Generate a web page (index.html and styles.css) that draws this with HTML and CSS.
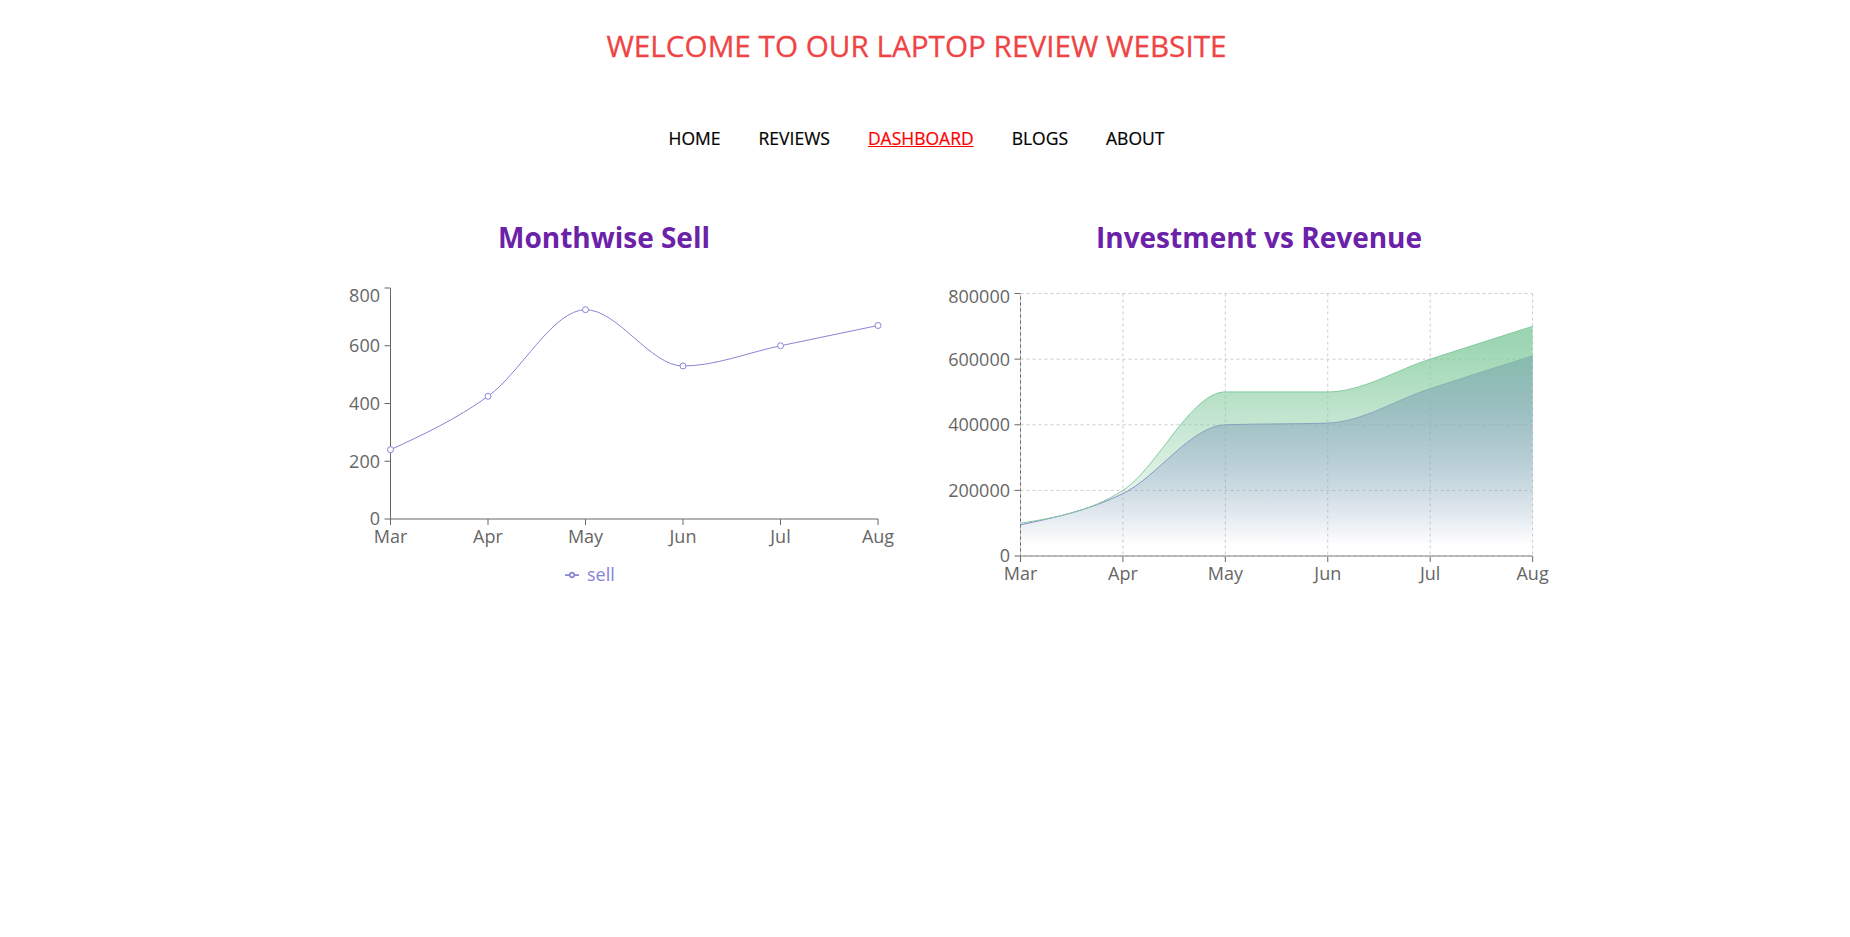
FILE: index.html
```html
<!DOCTYPE html>
<html lang="en">
<head>
<meta charset="utf-8">
<title>Laptop Review - Dashboard</title>
<link rel="stylesheet" href="styles.css">
</head>
<body>
<header class="top">
  <h1 class="site-title">WELCOME TO OUR LAPTOP REVIEW WEBSITE</h1>
  <nav>
    <ul class="nav">
      <li><a href="#">HOME</a></li>
      <li><a href="#">REVIEWS</a></li>
      <li><a href="#" class="active">DASHBOARD</a></li>
      <li><a href="#">BLOGS</a></li>
      <li><a href="#">ABOUT</a></li>
    </ul>
  </nav>
</header>

<main class="charts">
  <section class="chart chart-left">
    <h2 class="chart-title">Monthwise Sell</h2>
    <svg class="chart-svg" width="648" height="330" viewBox="0 0 648 330">
      <g class="axis">
        <line x1="110.5" y1="28" x2="110.5" y2="259"/>
        <line x1="110.5" y1="259" x2="598" y2="259"/>
        <line x1="104.5" y1="259" x2="110.5" y2="259"/>
        <line x1="104.5" y1="201.25" x2="110.5" y2="201.25"/>
        <line x1="104.5" y1="143.5" x2="110.5" y2="143.5"/>
        <line x1="104.5" y1="85.75" x2="110.5" y2="85.75"/>
        <line x1="104.5" y1="28" x2="110.5" y2="28"/>
        <line x1="110.5" y1="259" x2="110.5" y2="265"/>
        <line x1="208" y1="259" x2="208" y2="265"/>
        <line x1="305.5" y1="259" x2="305.5" y2="265"/>
        <line x1="403" y1="259" x2="403" y2="265"/>
        <line x1="500.5" y1="259" x2="500.5" y2="265"/>
        <line x1="598" y1="259" x2="598" y2="265"/>
      </g>
      <g class="tick-y">
        <text x="100" y="259" dy="0.355em">0</text>
        <text x="100" y="201.25" dy="0.355em">200</text>
        <text x="100" y="143.5" dy="0.355em">400</text>
        <text x="100" y="85.75" dy="0.355em">600</text>
        <text x="100" y="36" dy="0.355em">800</text>
      </g>
      <g class="tick-x">
        <text x="110.5" y="283">Mar</text>
        <text x="208" y="283">Apr</text>
        <text x="305.5" y="283">May</text>
        <text x="403" y="283">Jun</text>
        <text x="500.5" y="283">Jul</text>
        <text x="598" y="283">Aug</text>
      </g>
      <path class="sell-line" d="M110.5,189.7C143,174.67,175.5,159.63,208,136.3C240.5,112.97,273,49.7,305.5,49.7C338,49.7,370.5,106,403,106C435.5,106,468,92.5,500.5,85.75C533,79,565.5,72.25,598,65.5"/>
      <g class="dots">
        <circle cx="110.5" cy="189.7" r="3"/>
        <circle cx="208" cy="136.3" r="3"/>
        <circle cx="305.5" cy="49.7" r="3"/>
        <circle cx="403" cy="106" r="3"/>
        <circle cx="500.5" cy="85.75" r="3"/>
        <circle cx="598" cy="65.5" r="3"/>
      </g>
      <g class="legend">
        <path transform="translate(285,308) scale(0.4375)" d="M0,16h10.67A5.33,5.33,0,1,1,21.33,16H32M21.33,16A5.33,5.33,0,1,1,10.67,16"/>
        <text x="307" y="315" dy="0.355em">sell</text>
      </g>
    </svg>
  </section>

  <section class="chart chart-right">
    <h2 class="chart-title">Investment vs Revenue</h2>
    <svg class="chart-svg" width="622" height="330" viewBox="0 0 622 330">
      <defs>
        <linearGradient id="gradInvest" x1="0" y1="0" x2="0" y2="1">
          <stop offset="5%" stop-color="#8884d8" stop-opacity="0.8"/>
          <stop offset="95%" stop-color="#8884d8" stop-opacity="0"/>
        </linearGradient>
        <linearGradient id="gradRevenue" x1="0" y1="0" x2="0" y2="1">
          <stop offset="5%" stop-color="#82ca9d" stop-opacity="0.8"/>
          <stop offset="95%" stop-color="#82ca9d" stop-opacity="0"/>
        </linearGradient>
      </defs>
      <g class="axis">
        <line x1="72.5" y1="33.5" x2="72.5" y2="296"/>
        <line x1="72.5" y1="296" x2="584.6" y2="296"/>
        <line x1="66.5" y1="296" x2="72.5" y2="296"/>
        <line x1="66.5" y1="230.375" x2="72.5" y2="230.375"/>
        <line x1="66.5" y1="164.75" x2="72.5" y2="164.75"/>
        <line x1="66.5" y1="99.125" x2="72.5" y2="99.125"/>
        <line x1="66.5" y1="33.5" x2="72.5" y2="33.5"/>
        <line x1="72.5" y1="296" x2="72.5" y2="302"/>
        <line x1="174.92" y1="296" x2="174.92" y2="302"/>
        <line x1="277.34" y1="296" x2="277.34" y2="302"/>
        <line x1="379.76" y1="296" x2="379.76" y2="302"/>
        <line x1="482.18" y1="296" x2="482.18" y2="302"/>
        <line x1="584.6" y1="296" x2="584.6" y2="302"/>
      </g>
      <g class="grid">
        <line x1="72.5" y1="296" x2="584.6" y2="296"/>
        <line x1="72.5" y1="230.375" x2="584.6" y2="230.375"/>
        <line x1="72.5" y1="164.75" x2="584.6" y2="164.75"/>
        <line x1="72.5" y1="99.125" x2="584.6" y2="99.125"/>
        <line x1="72.5" y1="33.5" x2="584.6" y2="33.5"/>
        <line x1="72.5" y1="33.5" x2="72.5" y2="296"/>
        <line x1="174.92" y1="33.5" x2="174.92" y2="296"/>
        <line x1="277.34" y1="33.5" x2="277.34" y2="296"/>
        <line x1="379.76" y1="33.5" x2="379.76" y2="296"/>
        <line x1="482.18" y1="33.5" x2="482.18" y2="296"/>
        <line x1="584.6" y1="33.5" x2="584.6" y2="296"/>
      </g>
      <path class="area-invest" d="M72.5,264.83C106.64,257.59,140.78,250.34,174.92,233.66C209.06,216.98,243.2,165.84,277.34,164.75C311.48,163.66,345.62,164.2,379.76,163.11C413.9,162.02,448.04,139.87,482.18,128.66C516.32,117.45,550.46,106.64,584.6,95.84L584.6,296L72.5,296Z"/>
      <path class="line-invest" d="M72.5,264.83C106.64,257.59,140.78,250.34,174.92,233.66C209.06,216.98,243.2,165.84,277.34,164.75C311.48,163.66,345.62,164.2,379.76,163.11C413.9,162.02,448.04,139.87,482.18,128.66C516.32,117.45,550.46,106.64,584.6,95.84"/>
      <path class="area-revenue" d="M72.5,263.19C106.64,257.72,140.78,252.25,174.92,230.38C209.06,208.5,243.2,131.94,277.34,131.94C311.48,131.94,345.62,131.94,379.76,131.94C413.9,131.94,448.04,110.06,482.18,99.13C516.32,88.19,550.46,77.25,584.6,66.31L584.6,296L72.5,296Z"/>
      <path class="line-revenue" d="M72.5,263.19C106.64,257.72,140.78,252.25,174.92,230.38C209.06,208.5,243.2,131.94,277.34,131.94C311.48,131.94,345.62,131.94,379.76,131.94C413.9,131.94,448.04,110.06,482.18,99.13C516.32,88.19,550.46,77.25,584.6,66.31"/>
      <g class="tick-y">
        <text x="62" y="296" dy="0.355em">0</text>
        <text x="62" y="230.375" dy="0.355em">200000</text>
        <text x="62" y="164.75" dy="0.355em">400000</text>
        <text x="62" y="99.125" dy="0.355em">600000</text>
        <text x="62" y="37" dy="0.355em">800000</text>
      </g>
      <g class="tick-x">
        <text x="72.5" y="320">Mar</text>
        <text x="174.92" y="320">Apr</text>
        <text x="277.34" y="320">May</text>
        <text x="379.76" y="320">Jun</text>
        <text x="482.18" y="320">Jul</text>
        <text x="584.6" y="320">Aug</text>
      </g>
    </svg>
  </section>
</main>
</body>
</html>
```
FILE: styles.css
```css
html, body {
  margin: 0;
  padding: 0;
  background: #ffffff;
}

body {
  font-family: "Open Sans", "Noto Sans", "Liberation Sans", sans-serif;
  color: #000;
}

.top {
  padding-right: 17px;
  text-align: center;
}

.site-title {
  margin: 26px 0 0;
  font-size: 29.7px;
  line-height: 40px;
  font-weight: 400;
  color: #ef4444;
  -webkit-text-stroke: 0.3px #ef4444;
}

.nav {
  list-style: none;
  margin: 60px 0 0;
  padding: 0;
  display: flex;
  justify-content: center;
  gap: 38px;
}

.nav li {
  font-size: 17.5px;
  line-height: 24px;
}

.nav a {
  color: #000;
  text-decoration: none;
  -webkit-text-stroke: 0.2px #000;
}

.nav a.active {
  color: #ff0000;
  text-decoration: underline;
  -webkit-text-stroke: 0.2px #ff0000;
}

.charts {
  display: flex;
  justify-content: center;
  gap: 20px;
  margin-top: 68px;
}

.chart {
  display: flex;
  flex-direction: column;
  align-items: stretch;
}

.chart-left { width: 648px; }
.chart-right { width: 622px; }

.chart-title {
  margin: 0 0 6px;
  text-align: center;
  font-size: 28px;
  line-height: 36px;
  font-weight: 700;
  color: #6b21a8;
  padding-top: 1px;
}

.chart-svg {
  display: block;
  overflow: visible;
  margin-top: -1px;
}

.axis line {
  stroke: #666;
  stroke-width: 1;
}

.grid line {
  stroke: #ccc;
  stroke-width: 1;
  stroke-dasharray: 3 3;
}

.tick-y text,
.tick-x text {
  fill: #666;
  font-size: 18px;
}

.tick-y text { text-anchor: end; }
.tick-x text { text-anchor: middle; }

.sell-line {
  fill: none;
  stroke: #8884d8;
  stroke-width: 1;
}

.dots circle {
  fill: #fff;
  stroke: #8884d8;
  stroke-width: 1;
}

.legend path {
  fill: none;
  stroke: #8884d8;
  stroke-width: 4;
}

.legend text {
  fill: #8884d8;
  font-size: 18px;
}

.area-invest { fill: url(#gradInvest); stroke: none; }
.area-revenue { fill: url(#gradRevenue); stroke: none; }
.line-invest { fill: none; stroke: #8884d8; stroke-width: 1; }
.line-revenue { fill: none; stroke: #82ca9d; stroke-width: 1; }
```
